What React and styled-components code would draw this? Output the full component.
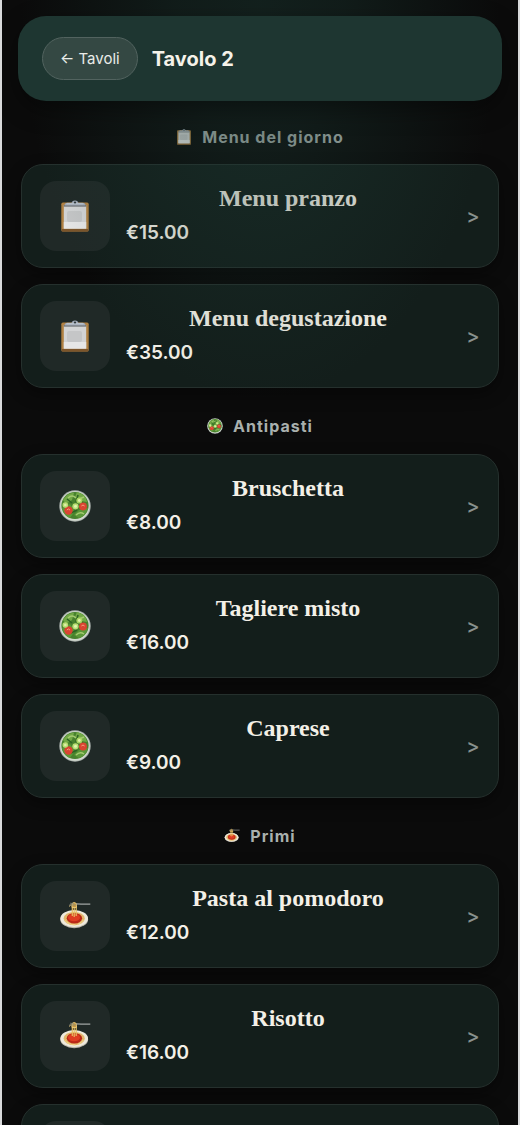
import React from "react";
import styled, { createGlobalStyle } from "styled-components";

const GlobalStyle = createGlobalStyle`
  * {
    box-sizing: border-box;
  }

  body {
    margin: 0;
    background: #0b0b0b;
    font-family: Inter, "Liberation Sans", sans-serif;
  }

  button {
    font-family: inherit;
  }
`;

const Page = styled.div`
  position: relative;
  height: 100vh;
  overflow: hidden;
  padding: 16px 16px 0;
  background: #0b0b0b;
  border: solid #d9dadb;
  border-width: 0 2px;
`;

const Glow = styled.div`
  position: absolute;
  inset: 0;
  pointer-events: none;
  background: radial-gradient(
    ellipse 240px 400px at 50% 0,
    rgba(30, 62, 55, 0.42),
    rgba(30, 62, 55, 0.34) 35%,
    rgba(30, 62, 55, 0) 100%
  );
`;

const Header = styled.header`
  position: relative;
  z-index: 1;
  display: flex;
  align-items: center;
  gap: 14px;
  padding: 21px 24px;
  background: #1e3631;
  border-radius: 28px;
  box-shadow: 0 8px 24px rgba(0, 0, 0, 0.4);
`;

const BackButton = styled.button`
  height: 43px;
  padding: 0 17px;
  font-size: 15px;
  color: #e9ece8;
  background: #344843;
  border: 1px solid #52635f;
  border-radius: 22px;
  white-space: nowrap;
  cursor: pointer;
`;

const TableName = styled.h1`
  margin: 0;
  font-size: 20px;
  font-weight: 700;
  color: #f5f2e9;
`;

const Menu = styled.main`
  padding: 0 3px;
`;

const SectionTitle = styled.h2`
  display: flex;
  align-items: center;
  justify-content: center;
  gap: 10px;
  height: ${(props) => (props.$first ? "63px" : "66px")};
  margin: 0;
  padding-top: ${(props) => (props.$first ? "10px" : "11px")};
  padding-bottom: 1px;
  font-size: 16px;
  font-weight: 700;
  letter-spacing: 1px;
  color: #a9b0ad;
`;

const CardList = styled.div`
  display: flex;
  flex-direction: column;
  gap: 16px;
`;

const Card = styled.button`
  display: flex;
  align-items: center;
  gap: 16px;
  width: 100%;
  min-height: 104px;
  padding: 16px 18px;
  text-align: left;
  color: #f3f0e7;
  background: #131e1b;
  border: 1px solid #25302d;
  border-radius: 22px;
  box-shadow: 0 6px 16px rgba(0, 0, 0, 0.4);
  cursor: pointer;
`;

const IconTile = styled.span`
  display: flex;
  flex: none;
  align-items: center;
  justify-content: center;
  width: 70px;
  height: 70px;
  background: #202927;
  border-radius: 16px;
`;

const CardText = styled.span`
  display: flex;
  flex: 1;
  flex-direction: column;
  gap: 8px;
  min-width: 0;
  padding-bottom: 4px;
`;

const DishName = styled.span`
  font-family: "Liberation Serif", serif;
  font-size: 24px;
  font-weight: 700;
  line-height: 30px;
  text-align: center;
`;

const Price = styled.span`
  font-size: 19px;
  font-weight: 600;
  line-height: 24px;
`;

const Chevron = styled.span`
  flex: none;
  width: 14px;
  font-size: 20px;
  font-weight: 500;
  text-align: center;
  color: #89918e;
`;

const ClipboardIcon = ({ size }) => (
  <svg width={size} height={size} viewBox="0 0 32 32" aria-hidden="true">
    <rect x="2.3" y="2.6" width="27.4" height="29" rx="1.6" fill="#b18142" />
    <path d="M2.8 29h26.4v1.4q0 1.2-1.2 1.2H4q-1.2 0-1.2-1.2z" fill="#7c552b" />
    <rect x="4.8" y="5" width="22.4" height="23.6" fill="#d3d4d5" />
    <path d="M4.8 22h22.4v6.6H4.8z" fill="#e6e6e6" />
    <rect x="8" y="11" width="15" height="11" rx="2" fill="#c5c6c7" />
    <path d="M4.8 5h22.4v1.6H4.8z" fill="#696c70" />
    <path
      d="M5.5 5.4c0-1.8 1-2.6 3-2.6h4.1C13.4 1.2 14 .5 16 .5s2.6.7 3.4 2.3h4.1c2 0 3 .8 3 2.6z"
      fill="#a3abb8"
    />
    <path d="M7.5 3.8h17" stroke="#ccd3dc" strokeWidth="0.8" />
    <circle cx="16" cy="2.5" r="1.1" fill="#303a3c" />
  </svg>
);

const SaladIcon = ({ size }) => (
  <svg width={size} height={size} viewBox="0 0 32 32" aria-hidden="true">
    <circle cx="16" cy="16" r="15.7" fill="#a9b1ac" />
    <circle cx="16" cy="16" r="14.7" fill="#d3d9cf" />
    <circle cx="16" cy="15.5" r="13.6" fill="#47812d" />
    <path d="M4 10q5-8 11-7l-2 7-6 4zM18 2q9 2 10 10l-6-1-6-4z" fill="#72a946" />
    <path d="M3 18l8-4 5 7-5 7q-6-2-8-10zM20 20l9-2q-2 8-9 10l-5-3z" fill="#5b9838" />
    <path d="M8 9l5 4M19 5l-2 7M24 12l-6 5M12 23l6-3" stroke="#2e6424" strokeWidth="1.6" />
    <path
      d="M9 8q4-4 8 0M17 25q4-4 8-1M5 14l5 7M20 9l5-2"
      fill="none"
      stroke="#a4ca70"
      strokeWidth="1.4"
    />
    <circle cx="9.5" cy="20.5" r="4.2" fill="#d94431" />
    <circle cx="24" cy="16.5" r="3.9" fill="#d94431" />
    <path d="M7.8 20q1.6-2 3.2 0M22.4 16q1.6-2 3.2 0" fill="none" stroke="#f4a07b" />
    <circle cx="6.3" cy="15" r="2.8" fill="#b9df73" />
    <circle cx="20.3" cy="10.5" r="3" fill="#a8d461" />
    <circle cx="16.5" cy="16.3" r="3.1" fill="#b9df73" />
    <circle cx="6.3" cy="15" r="1.3" fill="#dcefaa" />
    <circle cx="20.3" cy="10.5" r="1.4" fill="#dcefaa" />
    <circle cx="16.5" cy="16.3" r="1.5" fill="#e0f2b3" />
  </svg>
);

const PastaIcon = ({ size }) => (
  <svg width={size} height={size} viewBox="0 0 32 32" aria-hidden="true">
    <ellipse cx="15.2" cy="19.4" rx="13.9" ry="8.8" fill="#b9b5aa" />
    <ellipse cx="15.2" cy="18.5" rx="13.8" ry="8.6" fill="#eee9dc" />
    <ellipse cx="15.2" cy="18.6" rx="10.6" ry="6.7" fill="#e2b66a" />
    <path d="M5.5 20q4 5 11 4.8M24.5 20q-2 3-6 4.5" fill="none" stroke="#f3d68d" />
    <ellipse cx="15.4" cy="18.2" rx="7.7" ry="5.2" fill="#ba2918" />
    <ellipse cx="15" cy="17.5" rx="6" ry="3.8" fill="#df3d23" />
    <path
      d="M13.3 5v11M15.2 4v13M17.2 6v10"
      fill="none"
      stroke="#e8bf62"
      strokeWidth="1.2"
    />
    <path
      d="M10 6.5l2.3-2.1M13 3.5q2-2 4.4 0v4H13z"
      fill="#c89a40"
      stroke="#edcc7b"
      strokeWidth="0.9"
    />
    <path d="M17.4 3.8l4.7.4h9.2" fill="none" stroke="#a0a5a4" strokeWidth="1.3" />
    <path d="M10 5h7M11 3.2l4 .5" stroke="#878b82" strokeWidth="0.7" />
  </svg>
);

const sections = [
  {
    title: "Menu del giorno",
    icon: ClipboardIcon,
    dishes: [
      { name: "Menu pranzo", price: "€15.00" },
      { name: "Menu degustazione", price: "€35.00" },
    ],
  },
  {
    title: "Antipasti",
    icon: SaladIcon,
    dishes: [
      { name: "Bruschetta", price: "€8.00" },
      { name: "Tagliere misto", price: "€16.00" },
      { name: "Caprese", price: "€9.00" },
    ],
  },
  {
    title: "Primi",
    icon: PastaIcon,
    dishes: [
      { name: "Pasta al pomodoro", price: "€12.00" },
      { name: "Risotto", price: "€16.00" },
      {},
    ],
  },
];

const DishCard = ({ dish, icon: Icon }) => (
  <Card type="button">
    <IconTile>
      <Icon size={32} />
    </IconTile>
    {dish.name && (
      <>
        <CardText>
          <DishName>{dish.name}</DishName>
          <Price>{dish.price}</Price>
        </CardText>
        <Chevron aria-hidden="true">&gt;</Chevron>
      </>
    )}
  </Card>
);

const App = () => {
  return (
    <>
      <GlobalStyle />
      <Page>
        <Header>
          <BackButton type="button">← Tavoli</BackButton>
          <TableName>Tavolo 2</TableName>
        </Header>
        <Menu>
          {sections.map(({ title, icon: Icon, dishes }, index) => (
            <section key={title}>
              <SectionTitle $first={index === 0}>
                <Icon size={16} />
                {title}
              </SectionTitle>
              <CardList>
                {dishes.map((dish, i) => (
                  <DishCard key={i} dish={dish} icon={Icon} />
                ))}
              </CardList>
            </section>
          ))}
        </Menu>
        <Glow />
      </Page>
    </>
  );
};

export default App;
